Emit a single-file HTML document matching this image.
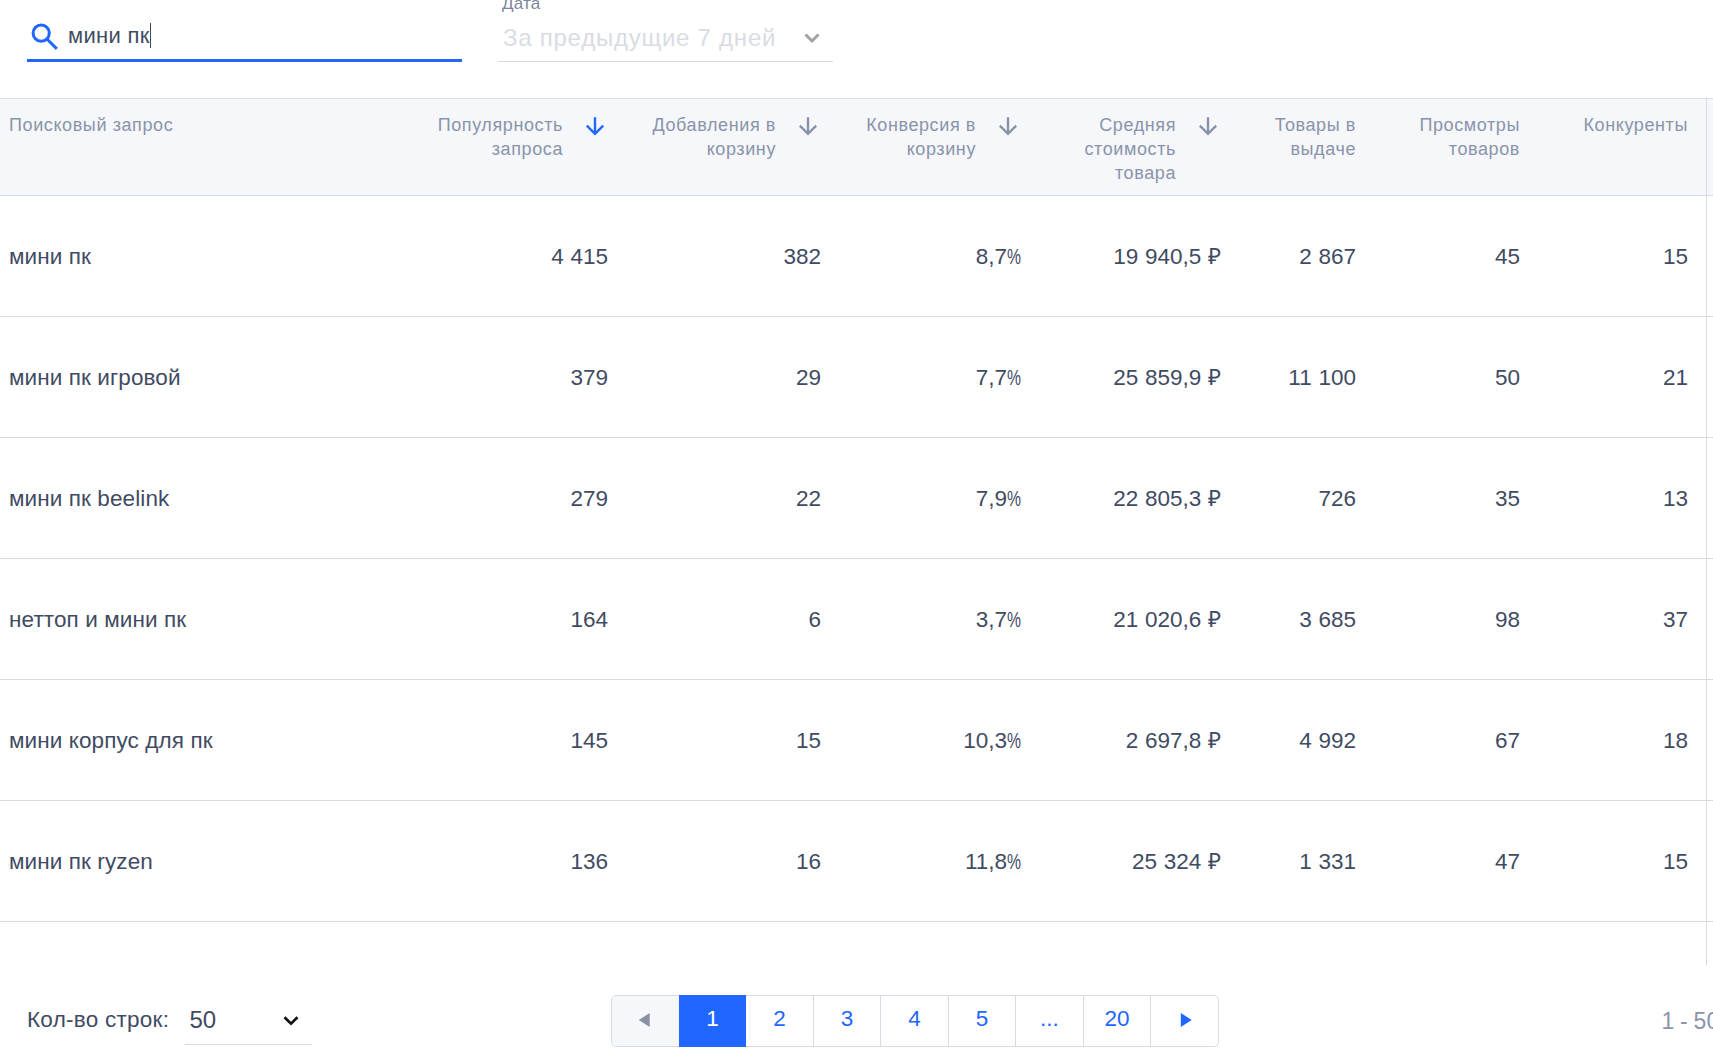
<!DOCTYPE html>
<html lang="ru"><head><meta charset="utf-8"><title>Поисковые запросы</title>
<style>
html,body{margin:0;padding:0;background:#fff;}
body{width:1713px;height:1064px;position:relative;overflow:hidden;font-family:"Liberation Sans",sans-serif;color:#3f4b63;}
.abs{position:absolute;white-space:nowrap;}
.hline{position:absolute;left:0;width:1713px;height:1px;background:#d5dae5;}
.th{position:absolute;font-size:18px;line-height:24px;color:#8a94a9;text-align:right;white-space:nowrap;letter-spacing:0.6px;}
.td{position:absolute;font-size:22.5px;line-height:26px;height:26px;white-space:nowrap;text-align:right;color:#3f4b63;word-spacing:0.5px;}
.pc{display:inline-block;width:14px;text-align:left;transform:scaleX(.7);transform-origin:0 50%;}
.tdl{position:absolute;font-size:22.5px;line-height:26px;height:26px;white-space:nowrap;left:9px;letter-spacing:0.1px;color:#3f4b63;}
.pg{position:absolute;top:996px;height:50px;width:67px;line-height:46px;text-align:center;font-size:22.5px;color:#2166ff;box-sizing:border-box;border-left:1px solid #d5dae5;}
</style></head><body>
<svg class="abs" style="left:26px;top:20px" width="36" height="34" viewBox="0 0 36 34"><circle cx="15.2" cy="13.1" r="8.1" fill="none" stroke="#2166ff" stroke-width="3"/><path d="M21.2 19.3 L30.8 28.9" stroke="#2166ff" stroke-width="3" fill="none" stroke-linecap="butt"/></svg>
<div class="abs" style="left:68px;top:23px;font-size:22px;line-height:26px;letter-spacing:0.3px;color:#3f4b63">мини пк</div>
<div class="abs" style="left:150px;top:23px;width:1px;height:25px;background:#3f4b63"></div>
<div class="abs" style="left:27px;top:59px;width:435px;height:3px;background:#2166ff"></div>
<div class="abs" style="left:502px;top:-6px;font-size:17px;line-height:20px;color:#7d879b;letter-spacing:0.2px">Дата</div>
<div class="abs" style="left:503px;top:24px;font-size:24px;line-height:28px;color:#d9dce3;letter-spacing:0.75px">За предыдущие 7 дней</div>
<svg class="abs" style="left:802.2px;top:28.8px" width="20" height="18" viewBox="0 0 20 18"><path d="M3.5 5.5 L10 12 L16.5 5.5" fill="none" stroke="#a5a1a1" stroke-width="3"/></svg>
<div class="abs" style="left:498px;top:61px;width:335px;height:1px;background:#d5dae5"></div>
<div class="abs" style="left:0;top:98px;width:1713px;height:98px;background:#f5f7fb;border-top:1px solid #d5dae5;border-bottom:1px solid #d5dae5;box-sizing:border-box"></div>
<div class="th" style="left:9px;top:113px;text-align:left">Поисковый запрос</div>
<div class="th" style="right:1150px;top:113px">Популярность<br>запроса</div>
<svg class="abs" style="left:584.7px;top:116px" width="20" height="20" viewBox="0 0 20 20"><path d="M10 1.2 V17 M1.8 9.7 L10 17.9 L18.2 9.7" fill="none" stroke="#2166ff" stroke-width="2.4"/></svg>
<div class="th" style="right:937px;top:113px">Добавления в<br>корзину</div>
<svg class="abs" style="left:797.7px;top:116px" width="20" height="20" viewBox="0 0 20 20"><path d="M10 1.2 V17 M1.8 9.7 L10 17.9 L18.2 9.7" fill="none" stroke="#8a94a9" stroke-width="2.4"/></svg>
<div class="th" style="right:737px;top:113px">Конверсия в<br>корзину</div>
<svg class="abs" style="left:997.7px;top:116px" width="20" height="20" viewBox="0 0 20 20"><path d="M10 1.2 V17 M1.8 9.7 L10 17.9 L18.2 9.7" fill="none" stroke="#8a94a9" stroke-width="2.4"/></svg>
<div class="th" style="right:537px;top:113px">Средняя<br>стоимость<br>товара</div>
<svg class="abs" style="left:1197.7px;top:116px" width="20" height="20" viewBox="0 0 20 20"><path d="M10 1.2 V17 M1.8 9.7 L10 17.9 L18.2 9.7" fill="none" stroke="#8a94a9" stroke-width="2.4"/></svg>
<div class="th" style="right:357px;top:113px">Товары в<br>выдаче</div>
<div class="th" style="right:193px;top:113px">Просмотры<br>товаров</div>
<div class="th" style="right:25px;top:113px">Конкуренты</div>
<div class="tdl" style="top:244px">мини пк</div><div class="td" style="right:1105px;top:244px">4 415</div><div class="td" style="right:892px;top:244px">382</div><div class="td" style="right:692px;top:244px">8,7<span class=pc>%</span></div><div class="td" style="right:492px;top:244px">19 940,5 ₽</div><div class="td" style="right:357px;top:244px">2 867</div><div class="td" style="right:193px;top:244px">45</div><div class="td" style="right:25px;top:244px">15</div><div class="hline" style="top:316px"></div>
<div class="tdl" style="top:365px">мини пк игровой</div><div class="td" style="right:1105px;top:365px">379</div><div class="td" style="right:892px;top:365px">29</div><div class="td" style="right:692px;top:365px">7,7<span class=pc>%</span></div><div class="td" style="right:492px;top:365px">25 859,9 ₽</div><div class="td" style="right:357px;top:365px">11 100</div><div class="td" style="right:193px;top:365px">50</div><div class="td" style="right:25px;top:365px">21</div><div class="hline" style="top:437px"></div>
<div class="tdl" style="top:486px">мини пк beelink</div><div class="td" style="right:1105px;top:486px">279</div><div class="td" style="right:892px;top:486px">22</div><div class="td" style="right:692px;top:486px">7,9<span class=pc>%</span></div><div class="td" style="right:492px;top:486px">22 805,3 ₽</div><div class="td" style="right:357px;top:486px">726</div><div class="td" style="right:193px;top:486px">35</div><div class="td" style="right:25px;top:486px">13</div><div class="hline" style="top:558px"></div>
<div class="tdl" style="top:607px">неттоп и мини пк</div><div class="td" style="right:1105px;top:607px">164</div><div class="td" style="right:892px;top:607px">6</div><div class="td" style="right:692px;top:607px">3,7<span class=pc>%</span></div><div class="td" style="right:492px;top:607px">21 020,6 ₽</div><div class="td" style="right:357px;top:607px">3 685</div><div class="td" style="right:193px;top:607px">98</div><div class="td" style="right:25px;top:607px">37</div><div class="hline" style="top:679px"></div>
<div class="tdl" style="top:728px">мини корпус для пк</div><div class="td" style="right:1105px;top:728px">145</div><div class="td" style="right:892px;top:728px">15</div><div class="td" style="right:692px;top:728px">10,3<span class=pc>%</span></div><div class="td" style="right:492px;top:728px">2 697,8 ₽</div><div class="td" style="right:357px;top:728px">4 992</div><div class="td" style="right:193px;top:728px">67</div><div class="td" style="right:25px;top:728px">18</div><div class="hline" style="top:800px"></div>
<div class="tdl" style="top:849px">мини пк ryzen</div><div class="td" style="right:1105px;top:849px">136</div><div class="td" style="right:892px;top:849px">16</div><div class="td" style="right:692px;top:849px">11,8<span class=pc>%</span></div><div class="td" style="right:492px;top:849px">25 324 ₽</div><div class="td" style="right:357px;top:849px">1 331</div><div class="td" style="right:193px;top:849px">47</div><div class="td" style="right:25px;top:849px">15</div><div class="hline" style="top:921px"></div>
<div class="abs" style="left:1706px;top:98px;width:1px;height:867px;background:#d5dae5"></div>
<div class="abs" style="left:27px;top:1007px;font-size:22.5px;line-height:26px;letter-spacing:0.25px;color:#3f4b63">Кол-во строк:</div>
<div class="abs" style="left:189.5px;top:1007px;font-size:24px;line-height:26px;color:#3f4b63">50</div>
<svg class="abs" style="left:281.2px;top:1011.7px" width="20" height="18" viewBox="0 0 20 18"><path d="M3.5 5.3 L10 11.6 L16.5 5.3" fill="none" stroke="#111" stroke-width="2.7"/></svg>
<div class="abs" style="left:185px;top:1044px;width:127px;height:1px;background:#d5dae5"></div>
<div class="abs" style="left:611px;top:995px;width:608px;height:52px;border:1px solid #d5dae5;border-radius:5px;box-sizing:border-box"></div>
<div class="pg" style="left:612px;width:67px;background:#f5f7fb;border-left:none;border-radius:4px 0 0 4px;"><svg class="abs" style="left:25.8px;top:16px" width="13" height="16" viewBox="0 0 13 16"><path d="M11.7 1 L0.8 8 L11.7 15 Z" fill="#8a90a1"/></svg></div><div class="pg" style="left:679px;width:67px;background:#2166ff;color:#fff;border-left:none;top:995px;height:52px;line-height:48px;">1</div><div class="pg" style="left:746px;width:67px;border-left:none;">2</div><div class="pg" style="left:813px;width:67px;">3</div><div class="pg" style="left:880px;width:68px;">4</div><div class="pg" style="left:948px;width:67px;">5</div><div class="pg" style="left:1015px;width:68px;">...</div><div class="pg" style="left:1083px;width:67px;">20</div><div class="pg" style="left:1150px;width:68px;border-radius:0 4px 4px 0;"><svg class="abs" style="left:28.6px;top:16px" width="13" height="16" viewBox="0 0 13 16"><path d="M0.8 1 L11.7 8 L0.8 15 Z" fill="#2166ff"/></svg></div>
<div class="abs" style="left:1661.5px;top:1007px;font-size:23px;line-height:28px;color:#8a94a9;letter-spacing:0.3px;word-spacing:-1.2px">1 - 50 из 983</div>
</body></html>
